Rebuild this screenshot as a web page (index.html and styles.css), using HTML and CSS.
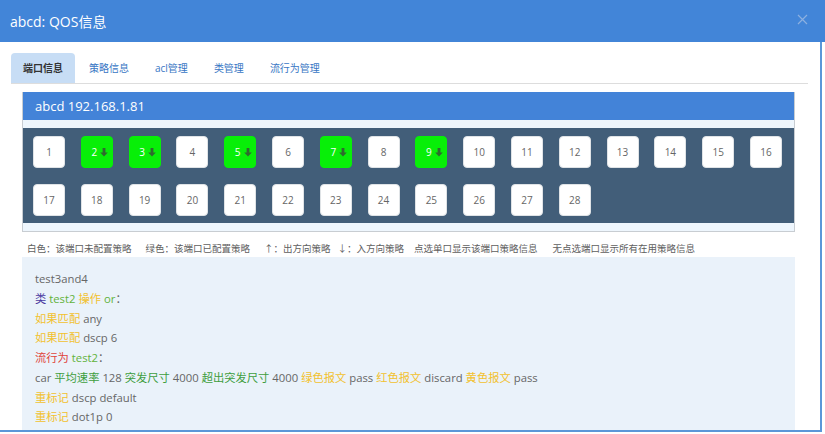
FILE: index.html
```html
<!DOCTYPE html>
<html>
<head>
<meta charset="utf-8">
<link rel="stylesheet" href="styles.css">
</head>
<body>
<div class="modal">
  <div class="modal-header">
    <span class="modal-title">abcd: QOS信息</span>
    <svg class="close" width="11" height="11" viewBox="0 0 11 11"><path d="M1 1 L10 10 M10 1 L1 10" stroke="#8cb0e0" stroke-width="1.2" fill="none"/></svg>
  </div>
  <div class="modal-body">
    <ul class="tabs">
      <li class="tab active">端口信息</li>
      <li class="tab">策略信息</li>
      <li class="tab">acl管理</li>
      <li class="tab">类管理</li>
      <li class="tab">流行为管理</li>
    </ul>
    <div class="panel">
      <div class="panel-heading">abcd 192.168.1.81</div>
      <div class="strip"></div>
      <div class="ports">
        <div class="port">1</div>
        <div class="port on">2<svg class="arr" width="8" height="9" viewBox="0 0 8 9"><path d="M2.6 0 H5.4 V4.4 H7.8 L4 8.6 L0.2 4.4 H2.6 Z" fill="#2f6a2f"/></svg></div>
        <div class="port on">3<svg class="arr" width="8" height="9" viewBox="0 0 8 9"><path d="M2.6 0 H5.4 V4.4 H7.8 L4 8.6 L0.2 4.4 H2.6 Z" fill="#2f6a2f"/></svg></div>
        <div class="port">4</div>
        <div class="port on">5<svg class="arr" width="8" height="9" viewBox="0 0 8 9"><path d="M2.6 0 H5.4 V4.4 H7.8 L4 8.6 L0.2 4.4 H2.6 Z" fill="#2f6a2f"/></svg></div>
        <div class="port">6</div>
        <div class="port on">7<svg class="arr" width="8" height="9" viewBox="0 0 8 9"><path d="M2.6 0 H5.4 V4.4 H7.8 L4 8.6 L0.2 4.4 H2.6 Z" fill="#2f6a2f"/></svg></div>
        <div class="port">8</div>
        <div class="port on">9<svg class="arr" width="8" height="9" viewBox="0 0 8 9"><path d="M2.6 0 H5.4 V4.4 H7.8 L4 8.6 L0.2 4.4 H2.6 Z" fill="#2f6a2f"/></svg></div>
        <div class="port">10</div>
        <div class="port">11</div>
        <div class="port">12</div>
        <div class="port">13</div>
        <div class="port">14</div>
        <div class="port">15</div>
        <div class="port">16</div>
        <div class="port">17</div>
        <div class="port">18</div>
        <div class="port">19</div>
        <div class="port">20</div>
        <div class="port">21</div>
        <div class="port">22</div>
        <div class="port">23</div>
        <div class="port">24</div>
        <div class="port">25</div>
        <div class="port">26</div>
        <div class="port">27</div>
        <div class="port">28</div>
      </div>
      <div class="strip bottom"></div>
    </div>
    <div class="legend">
      <span class="l1">白色：该端口未配置策略</span>
      <span class="l2">绿色：该端口已配置策略</span>
      <span class="l3">↑：出方向策略</span>
      <span class="l4">↓：入方向策略</span>
      <span class="l5">点选单口显示该端口策略信息</span>
      <span class="l6">无点选端口显示所有在用策略信息</span>
    </div>
    <div class="info">
      <div class="line">test3and4</div>
      <div class="line"><span class="pu">类</span> <span class="gr">test2</span> <span class="ye">操作</span> <span class="gr">or</span>：</div>
      <div class="line"><span class="ye">如果匹配</span> any</div>
      <div class="line"><span class="ye">如果匹配</span> dscp 6</div>
      <div class="line"><span class="re">流行为</span> <span class="gr">test2</span>：</div>
      <div class="line">car <span class="dg">平均速率</span> 128 <span class="dg">突发尺寸</span> 4000 <span class="dg">超出突发尺寸</span> 4000 <span class="ye">绿色报文</span> pass <span class="ye">红色报文</span> discard <span class="ye">黄色报文</span> pass</div>
      <div class="line"><span class="ye">重标记</span> dscp default</div>
      <div class="line"><span class="ye">重标记</span> dot1p 0</div>
    </div>
  </div>
</div>
</body>
</html>
```
FILE: styles.css
```css
html, body {
  margin: 0;
  padding: 0;
  background: #ffffff;
}
body {
  width: 825px;
  height: 434px;
  overflow: hidden;
  font-family: "Open Sans", "Noto Sans CJK SC", sans-serif;
}
.modal {
  width: 825px;
  height: 432px;
  display: flex;
  flex-direction: column;
  overflow: hidden;
}
.modal-header {
  flex: none;
  height: 42px;
  background: #4285d8;
  display: flex;
  align-items: center;
  justify-content: space-between;
  padding: 0 17px 0 10px;
}
.modal-title {
  color: #ffffff;
  font-size: 14px;
  font-weight: 400;
}
.close {
  display: block;
  margin-top: -3px;
}
.modal-body {
  flex: 1;
  width: 822px;
  box-sizing: border-box;
  border-right: 2px solid #5b97d8;
  border-bottom: 2px solid #5b97d8;
  padding: 11px 12px 0 11px;
  overflow: hidden;
  min-height: 0;
}
.tabs {
  list-style: none;
  margin: 0;
  padding: 0;
  display: flex;
  border-bottom: 1px solid #dddddd;
  height: 30px;
}
.tab {
  padding: 0 12px;
  margin-right: 2px;
  height: 30px;
  line-height: 30px;
  font-size: 10px;
  color: #3876c4;
  border-radius: 4px 4px 0 0;
}
.tab.active {
  background: #c7ddf5;
  color: #333333;
  font-weight: 600;
}
.panel {
  margin: 8px 13px 0 11px;
  border: 1px solid #c8cdd2;
  border-top: none;
}
.panel-heading {
  height: 28px;
  line-height: 28px;
  background: #4383d8;
  color: #ffffff;
  font-size: 13px;
  padding-left: 12px;
}
.strip {
  height: 8px;
  background: #eef6fd;
}
.strip.bottom {
  height: 8px;
}
.ports {
  background: #425e79;
  padding: 8px 10px 7px 10px;
  display: grid;
  grid-template-columns: repeat(16, 32px);
  column-gap: 15.8px;
  row-gap: 16px;
}
.port {
  width: 32px;
  height: 32px;
  box-sizing: border-box;
  background: #ffffff;
  border: 1px solid #dfe3e6;
  border-radius: 4px;
  display: flex;
  align-items: center;
  justify-content: center;
  font-size: 10px;
  color: #666666;
}
.port.on {
  background: #08ef08;
  border-color: #08ef08;
  color: #ffffff;
  padding-left: 6px;
}
.arr {
  display: block;
  margin-left: 3px;
  margin-top: 1px;
}
.legend {
  margin: 8px 0 0 16px;
  height: 16px;
  font-size: 9.5px;
  color: #5e5e5e;
  display: flex;
  align-items: center;
  white-space: nowrap;
}
.legend span {
  margin-right: 14px;
}
.legend .l3 { margin-right: 7px; }
.legend .l4 { margin-right: 10px; }
.legend .l5 { margin-right: 15px; }
.info {
  margin: 1px 13px 0 11px;
  background: #eaf2fa;
  padding: 12px 13px 20px 13px;
  font-size: 11.3px;
  color: #666666;
}
.line {
  height: 19.75px;
  line-height: 19.75px;
  white-space: nowrap;
}
.pu { color: #4a3aa0; }
.gr { color: #62b23a; }
.dg { color: #3e9e3e; }
.ye { color: #f2c12e; }
.re { color: #e0433a; }
```
